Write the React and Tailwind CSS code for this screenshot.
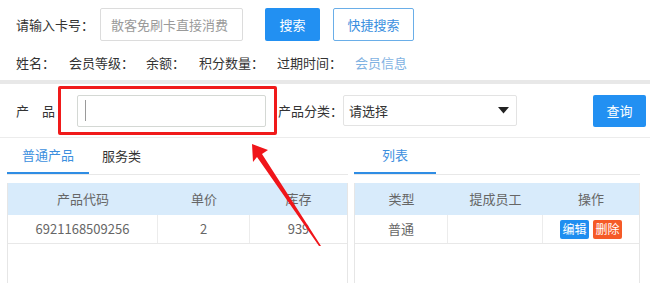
import React from "react";

function App() {
  return (
    <div className="relative w-[650px] h-[284px] overflow-hidden bg-white text-[13px] text-[#333] font-['Noto_Sans_CJK_SC',sans-serif]">
      {/* card search */}
      <div className="pt-[8px] pl-[16px] pb-[7px]">
        <div className="flex items-center h-[33px]">
          <span className="w-[84px]">请输入卡号：</span>
          <div className="w-[143px] h-[33px] border border-[#dcdcdc] rounded-[2px] flex items-center pl-[10px] text-[#9a9a9a]">
            散客免刷卡直接消费
          </div>
          <button className="ml-[22px] w-[55px] h-[33px] bg-[#2290f2] text-white rounded-[2px]">搜索</button>
          <button className="ml-[13px] w-[81px] h-[33px] border border-[#6aaee8] text-[#3b90e0] rounded-[2px]">快捷搜索</button>
        </div>
        <div className="flex items-center h-[20px] mt-[12px]">
          <span className="w-[53px]">姓名：</span>
          <span className="w-[77px]">会员等级：</span>
          <span className="w-[53px]">余额：</span>
          <span className="w-[78px]">积分数量：</span>
          <span className="w-[78px]">过期时间：</span>
          <span className="text-[#7fb2e2]">会员信息</span>
        </div>
      </div>
      <div className="h-[4px] bg-[#e8e8e8]" />

      {/* product query */}
      <div className="flex items-center h-[54px] pl-[16px] border-b border-[#ececec]">
        <span>产　品</span>
        <div className="ml-[3px] w-[219px] h-[49px] border-[3px] border-[#f01a1a] rounded-[2px] flex items-center pl-[16px]">
          <div className="w-[189px] h-[32px] border border-[#d4d8d4] rounded-[2px] flex items-center pl-[7px]">
            <div className="w-px h-[21px] bg-[#9a9a9a]" />
          </div>
        </div>
        <span className="ml-[1px]">产品分类：</span>
        <div className="w-[174px] h-[31px] border border-[#e3e3e3] rounded-[2px] flex items-center justify-between pl-[5px] pr-[7px]">
          <span>请选择</span>
          <svg width="11" height="7" viewBox="0 0 11 7">
            <path d="M0 0H11L5.5 6.5Z" fill="#222" />
          </svg>
        </div>
        <button className="ml-[76px] w-[53px] h-[32px] bg-[#2290f2] text-white rounded-[2px]">查询</button>
      </div>

      {/* panels */}
      <div className="flex gap-[6px] pl-[7px]">
        <div className="w-[341px]">
          <div className="flex h-[37px] border-b border-[#e8e8e8]">
            <div className="h-full flex items-center px-[15px] border-b-2 border-[#2f8de4] text-[#3c8fde] -mb-px">普通产品</div>
            <div className="h-full flex items-center px-[13px]">服务类</div>
          </div>
          <div className="mt-[8px] h-[100px] border-x border-[#e6e6e6] text-[#666]">
            <div className="flex h-[32px] bg-[#d8ebfb]">
              <div className="w-[150px] flex items-center justify-center">产品代码</div>
              <div className="w-[92px] flex items-center justify-center">单价</div>
              <div className="flex-1 flex items-center justify-center">库存</div>
            </div>
            <div className="flex h-[29px] border-b border-[#e8e8e8]">
              <div className="w-[150px] flex items-center justify-center border-r border-[#ececec]">6921168509256</div>
              <div className="w-[92px] flex items-center justify-center border-r border-[#ececec]">2</div>
              <div className="flex-1 flex items-center justify-center">939</div>
            </div>
          </div>
        </div>
        <div className="w-[286px]">
          <div className="flex h-[37px] border-b border-[#e8e8e8]">
            <div className="w-[82px] h-full flex items-center justify-center border-b-2 border-[#2f8de4] text-[#3c8fde] -mb-px">列表</div>
          </div>
          <div className="mt-[8px] h-[100px] border-x border-[#e6e6e6] text-[#666]">
            <div className="flex h-[32px] bg-[#d8ebfb]">
              <div className="w-[93px] flex items-center justify-center">类型</div>
              <div className="w-[95px] flex items-center justify-center">提成员工</div>
              <div className="flex-1 flex items-center justify-center">操作</div>
            </div>
            <div className="flex h-[29px] border-b border-[#e8e8e8]">
              <div className="w-[93px] flex items-center justify-center border-r border-[#ececec]">普通</div>
              <div className="w-[95px] flex items-center justify-center border-r border-[#ececec]"></div>
              <div className="flex-1 flex items-center justify-center gap-[4px]">
                <span className="w-[29px] h-[19px] bg-[#1f8ef0] text-white text-[12px] flex items-center justify-center rounded-[2px]">编辑</span>
                <span className="w-[29px] h-[19px] bg-[#f55a28] text-white text-[12px] flex items-center justify-center rounded-[2px]">删除</span>
              </div>
            </div>
          </div>
        </div>
      </div>

      {/* annotation arrow */}
      <svg className="absolute left-0 top-0 pointer-events-none" width="650" height="284">
        <polygon points="252,144 268,150 262,154 321,246 319,246 257,157 253,162" fill="#f0151a" />
      </svg>
    </div>
  );
}

export default App;
